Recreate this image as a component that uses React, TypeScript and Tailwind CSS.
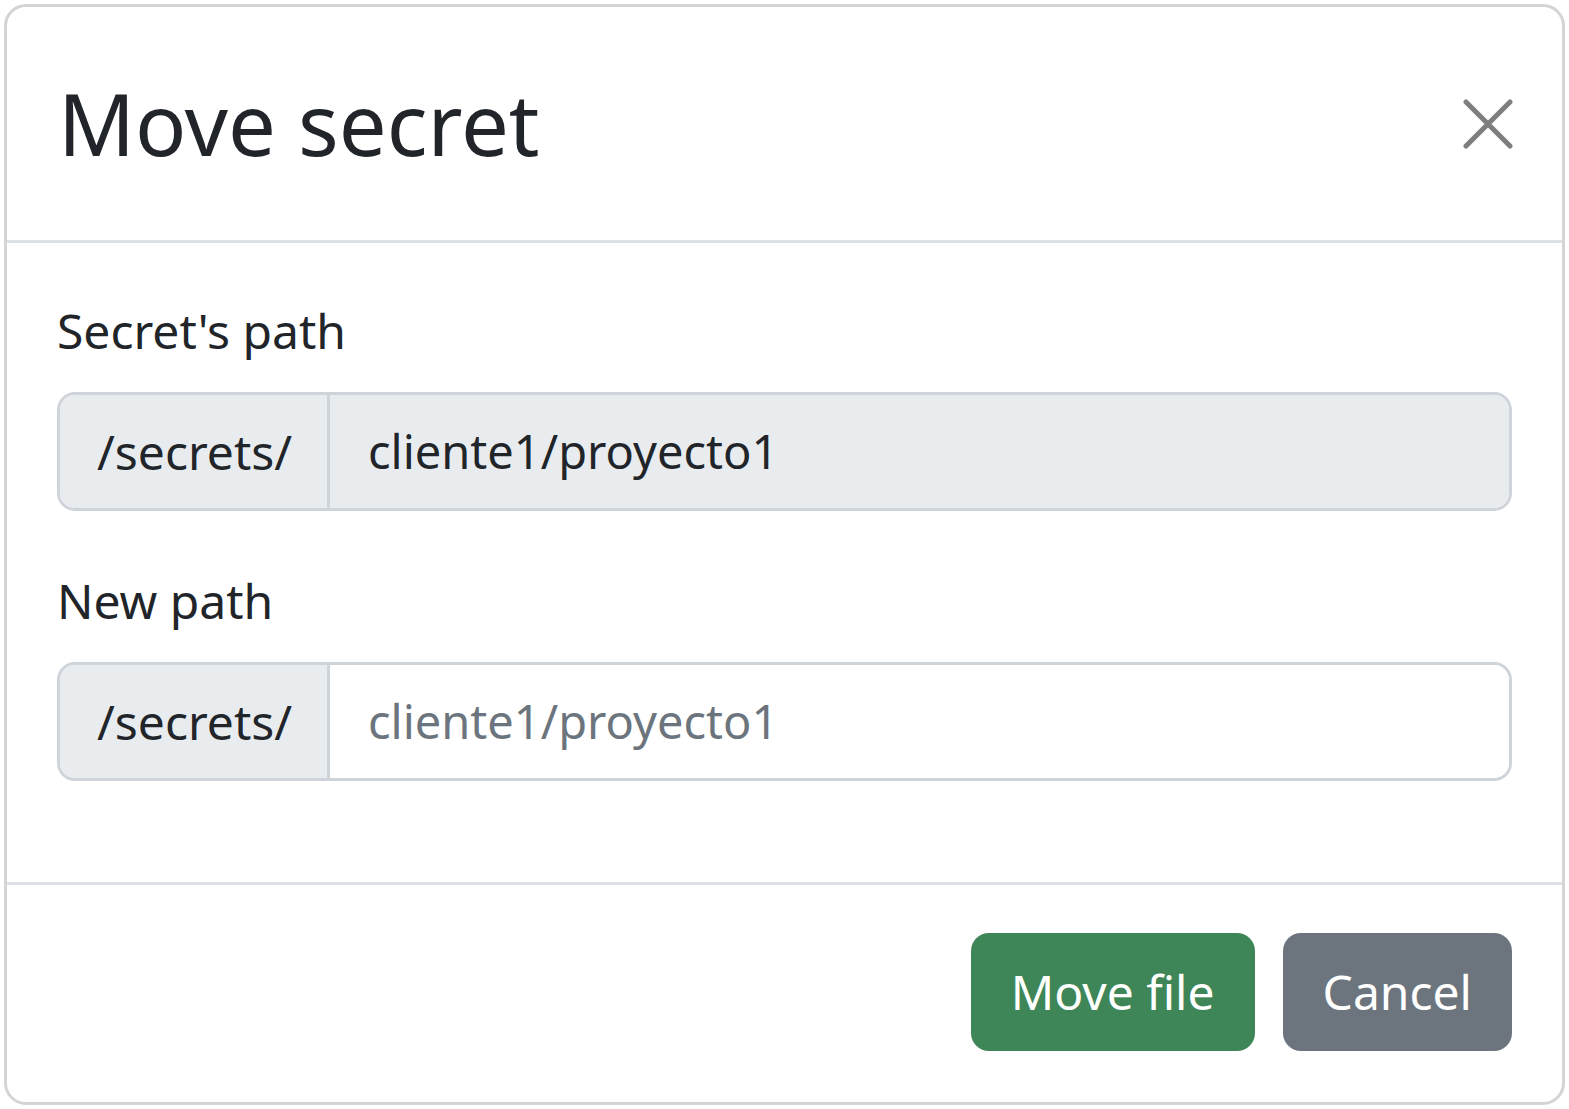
const font = { fontFamily: '"Noto Sans", "Open Sans", sans-serif' }

function PathField({ label, value, readOnly }: { label: string; value: string; readOnly?: boolean }) {
  return (
    <div className="flex flex-col">
      <label className="text-[48px] leading-[72px] text-[#212529] mb-[25px]">{label}</label>
      <div className="flex h-[119px] rounded-[18px] border-[3px] border-[#ced4da] overflow-hidden">
        <span className="flex items-center w-[270px] shrink-0 px-[37px] bg-[#e9ecef] border-r-[3px] border-[#ced4da] text-[48px] text-[#212529]">
          /secrets/
        </span>
        {readOnly ? (
          <div className="flex items-center flex-1 bg-[#e9ecef] px-[38px] text-[47px] text-[#212529]">{value}</div>
        ) : (
          <input
            className="flex-1 bg-white px-[38px] text-[47px] text-[#212529] placeholder:text-[#6c757d] outline-none"
            placeholder={value}
          />
        )}
      </div>
    </div>
  )
}

export default function App() {
  return (
    <div className="w-[1569px] h-[1109px] bg-white p-[4px]" style={font}>
      <div className="flex flex-col h-[1101px] rounded-[22px] border-[3px] border-[#d4d4d4]">
        <div className="flex items-center justify-between h-[236px] shrink-0 border-b-[3px] border-[#dee2e6] pl-[51px] pr-[49px]">
          <h1 className="text-[85px] leading-none text-[#212529]">Move secret</h1>
          <button className="text-[#7f7f7f]">
            <svg width="50" height="50" viewBox="0 0 50 50" fill="none" stroke="currentColor" strokeWidth="5" strokeLinecap="round">
              <path d="M3 3L47 47M47 3L3 47" />
            </svg>
          </button>
        </div>
        <div className="flex flex-col gap-[54px] flex-1 px-[50px] pt-[52px]">
          <PathField label="Secret's path" value="cliente1/proyecto1" readOnly />
          <PathField label="New path" value="cliente1/proyecto1" />
        </div>
        <div className="flex items-center justify-end gap-[28px] h-[220px] shrink-0 border-t-[3px] border-[#dee2e6] pr-[50px] pb-[4px]">
          <button className="h-[118px] px-[40px] rounded-[18px] bg-[#3e8557] text-white text-[48px]">Move file</button>
          <button className="h-[118px] px-[40px] rounded-[18px] bg-[#6c757d] text-white text-[48px]">Cancel</button>
        </div>
      </div>
    </div>
  )
}
